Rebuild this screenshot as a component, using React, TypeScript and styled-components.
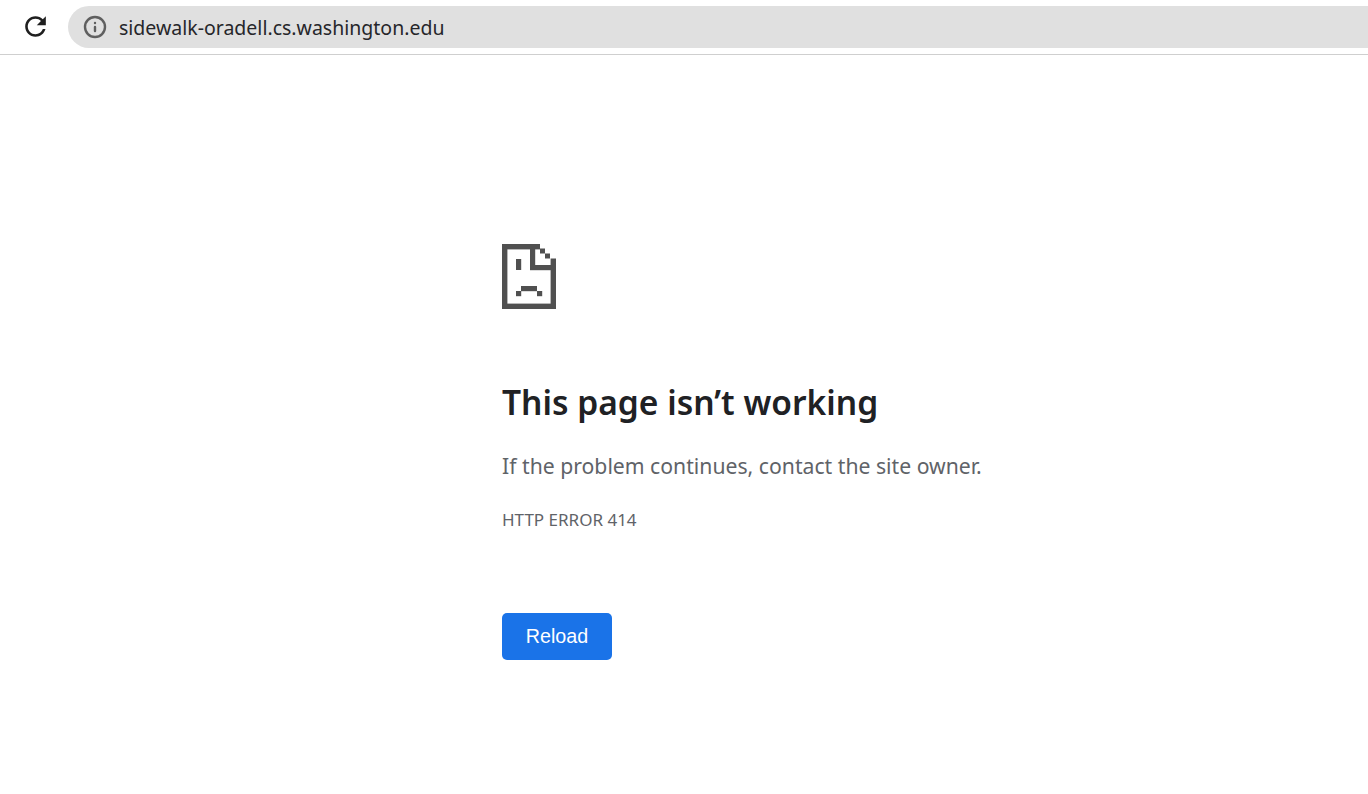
import React from 'react';
import styled, { createGlobalStyle } from 'styled-components';
import { Info } from 'lucide-react';

const GlobalStyle = createGlobalStyle`
  html, body {
    margin: 0;
    padding: 0;
    background: #fff;
    overflow: hidden;
  }
  body {
    font-family: "Noto Sans", "Open Sans", sans-serif;
  }
`;

const Page = styled.div`
  width: 1368px;
  height: 794px;
  display: flex;
  flex-direction: column;
`;

const Toolbar = styled.div`
  height: 54px;
  box-sizing: content-box;
  border-bottom: 1px solid #cfcfcf;
  display: flex;
  align-items: flex-start;
  padding-left: 20px;
`;

const ReloadIcon = styled.svg`
  display: block;
  width: 31px;
  height: 31px;
  margin-top: 11px;
  margin-right: 17px;
  fill: #1f1f1f;
`;

const AddressBar = styled.div`
  flex: 1;
  height: 42px;
  margin-top: 6px;
  background: #e0e0e0;
  border-radius: 21px 0 0 21px;
  display: flex;
  align-items: center;
  padding-left: 15px;
  gap: 12px;
`;

const SiteInfo = styled.div`
  width: 24px;
  height: 24px;
  color: #5f5f5f;
`;

const Url = styled.span`
  font-size: 19.5px;
  color: #26262a;
`;

const Content = styled.main`
  padding: 189px 0 0 502px;
  flex: 1;
`;

const SadFile = styled.svg`
  display: block;
  width: 54px;
  height: 65px;
  fill: #505050;
`;

const Title = styled.h1`
  margin: 71px 0 0;
  font-size: 33.55px;
  line-height: 44px;
  font-weight: 600;
  color: #202124;
`;

const Message = styled.p`
  margin: 27px 0 0;
  font-size: 21.2px;
  line-height: 30px;
  color: #5f6368;
`;

const ErrorCode = styled.div`
  margin: 29px 0 0;
  font-size: 17px;
  line-height: 20px;
  color: #5f6368;
`;

const ReloadButton = styled.button`
  display: block;
  margin-top: 83px;
  width: 110px;
  height: 47px;
  border: 0;
  border-radius: 5px;
  background: #1a73e8;
  color: #fff;
  font-family: "Liberation Sans", Arial, sans-serif;
  font-size: 19.7px;
`;

export default function App() {
  return (
    <Page>
      <GlobalStyle />
      <Toolbar>
        <ReloadIcon viewBox="0 0 24 24">
          <path d="M17.65 6.35C16.2 4.9 14.21 4 12 4c-4.42 0-7.99 3.58-7.99 8s3.57 8 7.99 8c3.73 0 6.84-2.55 7.73-6h-2.08c-.82 2.33-3.04 4-5.65 4-3.31 0-6-2.69-6-6s2.69-6 6-6c1.66 0 3.14.69 4.22 1.78L13 11h7V4l-2.35 2.35z" />
        </ReloadIcon>
        <AddressBar>
          <SiteInfo>
            <Info size={24} strokeWidth={2.4} />
          </SiteInfo>
          <Url>sidewalk-oradell.cs.washington.edu</Url>
        </AddressBar>
      </Toolbar>
      <Content>
        <SadFile viewBox="0 0 54 65">
          <rect x="0" y="0" width="5.4" height="65" />
          <rect x="0" y="0" width="38" height="5.4" />
          <rect x="0" y="59.6" width="54" height="5.4" />
          <rect x="48.6" y="14.5" width="5.4" height="50.5" />
          <rect x="38" y="4.5" width="5" height="5" />
          <rect x="43" y="9.5" width="5" height="5" />
          <rect x="28" y="0" width="5.2" height="26" />
          <rect x="28" y="21" width="26" height="5.2" />
          <rect x="14" y="15" width="5.2" height="11" />
          <rect x="19" y="42" width="16" height="5.2" />
          <rect x="14" y="47" width="5.2" height="5.2" />
          <rect x="35" y="47" width="5.2" height="5.2" />
        </SadFile>
        <Title>This page isn’t working</Title>
        <Message>If the problem continues, contact the site owner.</Message>
        <ErrorCode>HTTP ERROR 414</ErrorCode>
        <ReloadButton>Reload</ReloadButton>
      </Content>
    </Page>
  );
}
